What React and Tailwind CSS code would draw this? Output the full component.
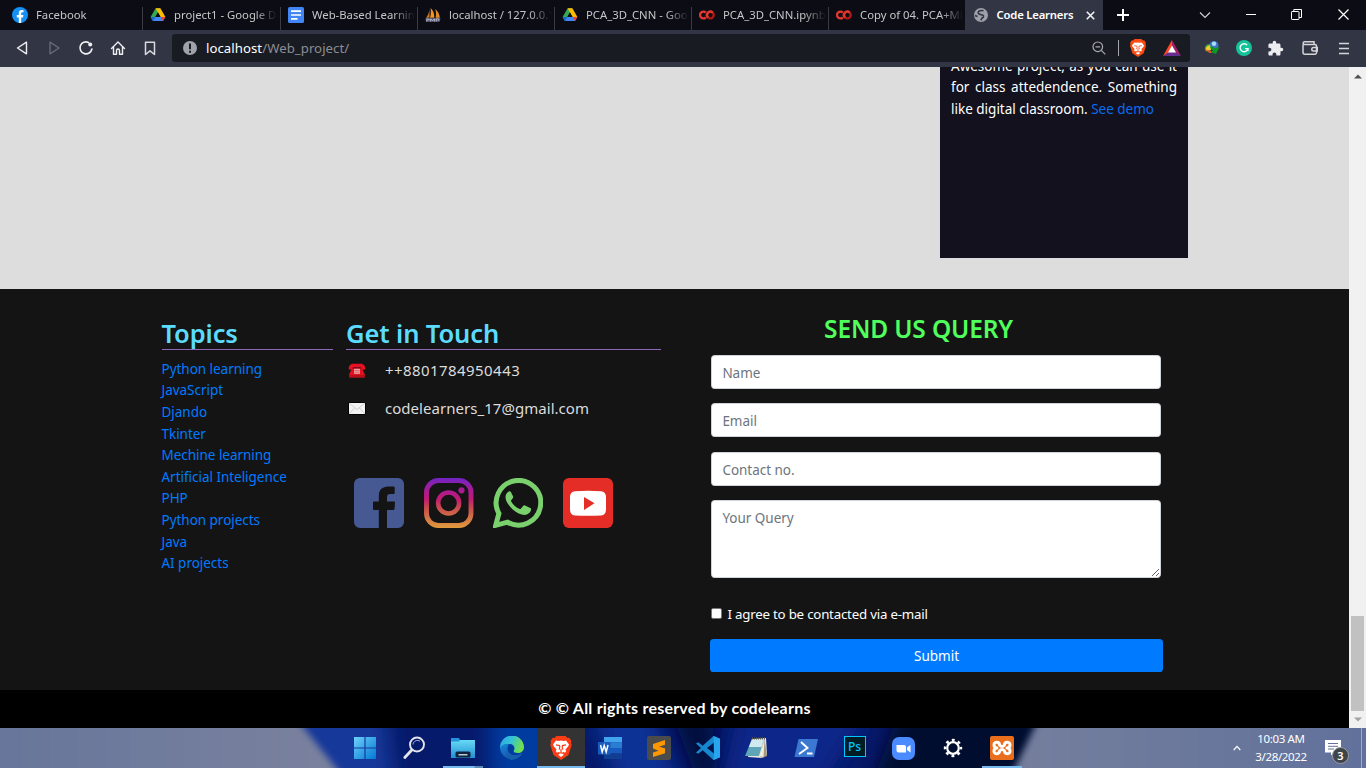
import React from "react";
import { MdExtension } from "react-icons/md";

const Drive = () => (
  <svg width="16" height="16" viewBox="0 0 16 16" className="shrink-0">
    <path d="M5.6 1.2h4.8L5.3 10 2.8 14 .6 10z" fill="#34a853" />
    <path d="M10.4 1.2 15.4 10h-5L5.6 1.2z" fill="#fbbc04" />
    <path d="M15.4 10 13 14H2.8L5.2 10z" fill="#4285f4" />
    <path d="M.6 10h4.6L2.8 14z" fill="#1967d2" />
    <path d="M15.4 10h-4.6L13 14z" fill="#ea4335" />
    <path d="M8 5.4 10.6 10H5.4z" fill="#0c0c15" />
  </svg>
);

const Docs = () => (
  <svg width="16" height="16" viewBox="0 0 16 16" className="shrink-0">
    <rect width="16" height="16" rx="1.6" fill="#4285f4" />
    <path d="M3 4.2h10M3 8h10M3 11.8h6.5" stroke="#fff" strokeWidth="1.7" />
  </svg>
);

const Facebook = () => (
  <svg width="16" height="16" viewBox="0 0 16 16" className="shrink-0">
    <circle cx="8" cy="8" r="8" fill="#1590f5" />
    <path d="M6.8 16v-5.6H4.8V8h2V6.3c0-2.1 1.2-3.2 3-3.2.9 0 1.7.15 1.7.15v2h-1c-1 0-1.3.6-1.3 1.25V8h2.2l-.35 2.4H9.2V16z" fill="#fff" />
  </svg>
);

const PhpMyAdmin = () => (
  <svg width="16" height="16" viewBox="0 0 17 16" className="shrink-0">
    <path d="M4.8 1.5V11H1.2C3.2 8 4.4 5 4.8 1.5z" fill="#c97a26" />
    <path d="M6 .5c3 3 4.200 6.500 3.800 10.500H5.400C6.200 8 6.500 4 6 .5z" fill="#f29420" />
    <path d="M11 1.500c3 2.500 4.500 6 4.800 9.500h-4.600c.8-3 .6-6-.2-9.500z" fill="#e08a26" />
    <path d="M.5 11.500h16l-1 3.700H1z" fill="#62627e" />
    <path d="M2 15v-3l2.500 1v-1M6 15v-3l2 2 2-2v3M12 15v-3h2.500v2" stroke="#c9c9da" strokeWidth=".8" fill="none" />
  </svg>
);

const Colab = () => (
  <svg width="16" height="16" viewBox="0 0 16 16" className="shrink-0" fill="none" strokeWidth="2.400">
    <path d="M6.800 5.500a3.400 3.400 0 1 0 0 5" stroke="#e0382f" />
    <circle cx="11.300" cy="8" r="3.400" stroke="#b01813" />
    <path d="M9 10.500a3.400 3.400 0 0 1 4.600-5" stroke="#e0382f" />
  </svg>
);

const Globe = () => (
  <svg width="14" height="14" viewBox="0 0 14 14" className="shrink-0">
    <circle cx="7" cy="7" r="7" fill="#9da0a8" />
    <path d="M9.500 2.800C7 2 4.200 2.600 4.200 4.600c0 1.700 1.600 1.900 3 2.100 1.600.2 2.600.9 2.200 2.200-.3.900-1.700.9-1.900 2.100l-.7 1.400M1 7.500l2.500 1" stroke="#323544" strokeWidth="1.600" fill="none" />
  </svg>
);

const tabs = [
  { title: "Facebook", Icon: Facebook, fit: "pl-3 w-[143px]" },
  { title: "project1 - Google Drive", Icon: Drive, fit: "pl-[7px] w-[138px]" },
  { title: "Web-Based Learning", Icon: Docs, fit: "pl-[7px] w-[137px]" },
  { title: "localhost / 127.0.0.1", Icon: PhpMyAdmin, fit: "pl-[7px] w-[137px]" },
  { title: "PCA_3D_CNN - Google", Icon: Drive, fit: "pl-[7px] w-[137px]" },
  { title: "PCA_3D_CNN.ipynb", Icon: Colab, fit: "pl-[7px] w-[137px]" },
  { title: "Copy of 04. PCA+ML", Icon: Colab, fit: "pl-[7px] w-[136px]" },
];

function TabBar() {
  return (
    <div className="flex h-[30px] shrink-0 bg-[#0c0c15] text-[11.3px] text-[#c6c6c8]">
      {tabs.map(({ title, Icon, fit }, i) => (
        <div key={title} className={"flex shrink-0 items-center overflow-hidden " + fit}>
          <Icon />
          <span className="ml-2 flex-1 overflow-hidden whitespace-nowrap [mask-image:linear-gradient(90deg,#000_80px,transparent_103px)]">{title}</span>
          {i < 6 && <i className="mt-[7px] h-[23px] w-px bg-[#3b3b41]" />}
        </div>
      ))}
      <div className="flex w-[138px] shrink-0 items-center bg-[#323544] pl-[9px] text-white">
        <Globe />
        <span className="ml-[8.500px] w-[78.500px] whitespace-nowrap text-[11.300px] font-semibold tracking-[-0.200px]">Code Learners</span>
        <svg width="9" height="9" viewBox="0 0 9 9" className="ml-[11px]"><path d="m.8.8 7.400 7.400M8.200.8.8 8.200" stroke="#f2f2f2" strokeWidth="1.600" /></svg>
      </div>
      <div className="flex flex-1 items-center">
        <svg width="12" height="12" viewBox="0 0 12 12" className="ml-[14px]"><path d="M6 0v12M0 6h12" stroke="#fff" strokeWidth="2" /></svg>
        <svg width="12" height="8" viewBox="0 0 12 8" className="-mt-px ml-[70px]"><path d="m1 1.500 5 5 5-5" stroke="#d4d4d6" strokeWidth="1.100" fill="none" /></svg>
        <i className="-mt-px ml-[35px] h-px w-[10px] bg-white" />
        <svg width="11" height="11" viewBox="0 0 11 11" className="-mt-[2px] ml-[35px]" fill="none" stroke="#fff"><rect x=".5" y="2.500" width="7.500" height="8" rx=".6" /><path d="M2.800 2.500v-2h7.700v8H8" /></svg>
        <svg width="11" height="11" viewBox="0 0 11 11" className="-mt-[2px] ml-[36px]"><path d="m.5.5 10 10M10.500.5l-10 10" stroke="#fff" strokeWidth="1.200" /></svg>
      </div>
    </div>
  );
}

const Lion = ({ size, color }) => (
  <span className="grid place-items-center">
    <svg width={size} height={size} viewBox="0 0 24 24">
      <path d="M12 0h4.500l2 2 1.800-.2L22.500 5 22 7l.7 2-3.200 10L12 24 4.500 19 1.300 9 2 7l-.5-2 2.200-3.200 1.800.2 2-2z" fill={color} />
      <path d="m7 4.600 2.300.4L12 4.500l2.700.5 2.300-.4 3 4-.9 2-2.600 2.800.7 1.800-1.200 1.500-1.500-.8-1.900 1.200 2.300 1.600L12 21l-2.900-2.300 2.300-1.600-1.900-1.200-1.500.8-1.200-1.500.7-1.800-2.600-2.800-.9-2z" fill="#fff" />
      <path d="m7 8.800 3.500.8.300 1.500-.6 2.500M17 8.800l-3.500.8-.3 1.500.6 2.500M12 13v3.500M10.500 17h3" stroke={color} strokeWidth="1.200" fill="none" />
    </svg>
  </span>
);

function Toolbar() {
  return (
    <div className="flex h-[37px] shrink-0 items-start bg-[#323544] pt-1">
      <div className="flex h-7 w-[172px] items-center pl-[16px]">
        <svg width="13" height="14" viewBox="0 0 13 14"><path d="M10.500 1.200v11.600L1.500 7z" fill="none" stroke="#f0f0f2" strokeWidth="1.400" strokeLinejoin="round" /></svg>
        <svg width="13" height="14" viewBox="0 0 13 14" className="ml-[19px]"><path d="M2 1.200v11.600L11 7z" fill="none" stroke="#686a76" strokeWidth="1.400" strokeLinejoin="round" /></svg>
        <svg width="16" height="16" viewBox="0 0 16 16" className="ml-[17px]"><path d="M10.500 2.400a6 6 0 1 0 3.400 6.600" fill="none" stroke="#f0f0f2" strokeWidth="1.600" strokeLinecap="round" /><circle cx="12.200" cy="4.400" r="2" fill="#f0f0f2" /></svg>
        <svg width="16" height="16" viewBox="0 0 16 16" className="ml-4"><path d="M1.500 8.500 8 2l6.500 6.500M3.500 7v7.200h3V10.500a1.500 1.500 0 0 1 3 0v3.700h3V7" fill="none" stroke="#f0f0f2" strokeWidth="1.400" strokeLinejoin="round" strokeLinecap="round" /></svg>
        <svg width="12" height="15" viewBox="0 0 12 15" className="ml-[18px]"><path d="M1.500 1.200h9v12.300L6 9.800l-4.500 3.700z" fill="none" stroke="#d8d9dd" strokeWidth="1.500" strokeLinejoin="round" /></svg>
      </div>
      <div className="flex h-7 w-[1018px] items-center rounded-[3px] bg-[#191b23] pl-[11px]">
        <svg width="14" height="14" viewBox="0 0 14 14"><circle cx="7" cy="7" r="7" fill="#a0a2aa" /><path d="M7 2.500v5.700M7 9.800v2" stroke="#191b23" strokeWidth="2" /></svg>
        <span className="ml-[9px] flex-1 pt-px text-[13.200px] tracking-[0.050px] text-[#8b8d92]"><b className="font-normal text-white">localhost</b>/Web_project/</span>
        <svg width="14" height="14" viewBox="0 0 14 14" fill="none" stroke="#a9abb1" strokeWidth="1.200"><circle cx="5.800" cy="5.800" r="4.800" /><path d="m9.300 9.300 4 4M3.500 5.800h4.600" /></svg>
        <i className="ml-3 h-4 w-px bg-[#a5a6ab]" />
        <span className="ml-[10px]"><Lion size={18} color="#fb4a12" /></span>
        <svg width="18" height="16" viewBox="0 0 18 16" className="ml-4 mr-[9px]"><path d="M9 0 0 16l9-5z" fill="#ff4724" /><path d="m9 0 9 16-9-5z" fill="#9e1f63" /><path d="M0 16h18l-9-6z" fill="#662d91" /><path d="m9 5.500 4 7H5z" fill="#fff" /></svg>
      </div>
      <div className="flex h-7 flex-1 items-center pl-[14px]">
        <svg width="16" height="16" viewBox="0 0 16 16"><circle cx="10" cy="5.500" r="4.500" fill="#3f73c8" /><circle cx="10" cy="3.800" r="2.200" fill="#a9dcf8" /><path d="M6 4C1 4-.5 8 2 11.500L7 10z" fill="#3aa23c" /><path d="M6 5.500C2.500 5.500 1 8 2.500 11L7 10z" fill="#f3d029" /><path d="M2 9.500C3 12 5 13.500 8 13l-1-2z" fill="#e05829" /><path d="m6 7.500 2.500-1 1.500 1.800 5.500-1.300-3.500 7-5-1.700 2-2z" fill="#0d9a1f" /></svg>
        <span className="ml-4 grid h-4 w-4 place-items-center rounded-full bg-[#15c39a]"><svg width="10" height="10" viewBox="0 0 10 10"><path d="M8.200 2.200A4 4 0 1 0 9 5.700H6M9 5.700V8" fill="none" stroke="#fff" strokeWidth="1.300" /></svg></span>
        <MdExtension className="ml-[15px] text-[17px] text-[#ededf0]" />
        <svg width="16" height="14" viewBox="0 0 16 14" className="ml-[18px]" fill="none" stroke="#d5d6da" strokeWidth="1.500"><path d="M1 3.500v8a1.700 1.700 0 0 0 1.700 1.700H13a1.500 1.500 0 0 0 1.500-1.500V5A1.500 1.500 0 0 0 13 3.500H2.500a1.300 1.300 0 0 1 0-2.700H12V3" /><path d="M15.500 6.500h-4a1.700 1.700 0 0 0 0 3.500h4z" /></svg>
        <svg width="10" height="13" viewBox="0 0 10 13" className="ml-[21px]"><path d="M0 1.500h10M0 6.500h10M0 11.500h10" stroke="#d5d6da" strokeWidth="1.700" /></svg>
      </div>
    </div>
  );
}

const topics = ["Python learning", "JavaScript", "Djando", "Tkinter", "Mechine learning", "Artificial Inteligence", "PHP", "Python projects", "Java", "AI projects"];

const Phone = () => (
  <svg width="18" height="16" viewBox="0 0 18 16">
    <path d="M4.200 5 1.300 11v3.500h15.400V11L13.800 5z" fill="#e01220" />
    <path d="M.8 6.500C.5 3 2.500.8 5 .8h8c2.500 0 4.500 2.200 4.200 5.700l-4.200.3-.5-2.500h-7L5 6.800z" fill="#e81123" />
    <path d="M5 4.300h8l.8 1.500H4.200z" fill="#8f0b14" />
    <path d="M6.200 5.800h5.600v5H6.200z" fill="#f3c4c7" /><path d="M8 5.800v5M10 5.800v5M6.200 7.500h5.600M6.200 9.200h5.600" stroke="#d8323f" strokeWidth=".5" />
    <path d="M1.500 12h15v2.300h-15z" fill="#b80e19" />
  </svg>
);
const Mail = () => (
  <svg width="18" height="13" viewBox="0 0 18 13">
    <path d="M.5.5h17v12H.5z" fill="#f2f2f2" stroke="#000" />
    <path d="m1 1 8 6.500L17 1M1 12l5.500-6M17 12l-5.500-6" fill="none" stroke="#c4c4c4" strokeWidth=".8" />
  </svg>
);

const SocialFacebook = () => (
  <svg width="50" height="50" viewBox="0 0 50 50">
    <path d="M6 0h38a6 6 0 0 1 6 6v38a6 6 0 0 1-6 6H33V32h6.500q1 0 1-1l.5-6.500q0-1-1-1h-7V19c0-2 1-3 3-3h3.500q1.200 0 1.200-1.200V9.700q0-1.200-1.200-1.200H34.500C28 8.500 24.800 12 24.800 18v5.500H20q-1 0-1 1V31q0 1 1 1h4.800v18H6a6 6 0 0 1-6-6V6a6 6 0 0 1 6-6z" fill="#475993" />
  </svg>
);
const SocialInstagram = () => (
  <svg width="50" height="50" viewBox="0 0 50 50" fill="none">
    <defs><linearGradient id="ig" gradientUnits="userSpaceOnUse" x1="0" y1="0" x2="0" y2="50"><stop stopColor="#7024c4" /><stop offset=".22" stopColor="#a51c98" /><stop offset=".42" stopColor="#c21975" /><stop offset=".6" stopColor="#c74c4d" /><stop offset="1" stopColor="#e09b3d" /></linearGradient></defs>
    <rect x="2.500" y="2.500" width="44.500" height="45" rx="12" stroke="url(#ig)" strokeWidth="4.900" />
    <circle cx="24.600" cy="25" r="10.500" stroke="url(#ig)" strokeWidth="4.600" />
    <circle cx="37.500" cy="12.300" r="3.100" fill="url(#ig)" />
  </svg>
);
const SocialWhatsapp = () => (
  <svg width="50" height="50" viewBox="0 0 50 50">
    <path d="M2.700 47.300 5.900 35.500A22.300 22.300 0 1 1 14.500 44.200z" fill="none" stroke="#7ad06d" strokeWidth="5" />
    <path d="M16.500 13.200c-1.500.3-4 2.600-4 6 0 3.800 3.200 8.300 6.700 11.700 4 3.900 9 6 12.300 6 3 0 6.400-2.500 6.600-5.400 0-.9-.1-1.200-.9-1.600l-5.200-2.500c-.8-.3-1.300-.2-1.900.5l-2.100 2.600c-.5.600-1 .7-1.800.3-3.400-1.500-6.200-4-8-7.200-.4-.7-.3-1.100.2-1.700l1.500-1.900c.4-.5.400-1 .1-1.700l-2.100-4.300c-.4-.8-.7-.9-1.400-.8z" fill="#7ad06d" />
  </svg>
);
const SocialYoutube = () => (
  <svg width="50" height="50" viewBox="0 0 50 50">
    <rect width="50" height="50" rx="6" fill="#e52d27" />
    <path d="M12 13.200q13-.8 26 0 5 .3 5 6v12q0 5.800-5 6.200-13 .8-26 0-5-.4-5-6.200v-12q0-5.700 5-6z" fill="#fff" />
    <path d="m21 19 10.500 6.300L21 32z" fill="#e52d27" />
  </svg>
);

const field = "block w-[450px] rounded-[3.600px] border border-[#ced4da] bg-white px-[10.400px] text-[13.500px] tracking-[-0.030px] text-[#495057] placeholder:text-[#6c757d] placeholder:opacity-100 outline-none";

function Page() {
  return (
    <main className="flex min-w-0 flex-1 flex-col bg-[#ddd]">
      <section className="h-[222px] shrink-0 overflow-hidden pl-[940px]">
        <article className="h-[191px] w-[248px] overflow-hidden bg-[#12111d] px-[11px] text-[13.500px] leading-[21.600px] text-white">
          <p className="-mt-[11.200px] [text-align-last:justify]">Awesome project, as you can use it</p>
          <p className="[text-align-last:justify]">for class attedendence. Something</p>
          <p className="whitespace-nowrap">like digital classroom. <a className="text-[#0a6cf0]">See demo</a></p>
        </article>
      </section>
      <footer className="flex h-[401px] shrink-0 bg-[#141414] pl-[162px]">
        <section className="w-[171px] pt-[27px]">
          <h2 className="h-[34px] border-b border-[#8d68b8] text-[25.500px] font-semibold leading-[35px] tracking-[-0.100px] text-[#5bdcff]"><span className="-ml-[0.600px]">Topics</span></h2>
          <ul className="-ml-[0.500px] mt-[8.800px] text-[13.500px] leading-[21.600px] tracking-[-0.030px] text-[#007bff]">
            {topics.map((t) => <li key={t}>{t}</li>)}
          </ul>
        </section>
        <section className="ml-[13px] w-[315px] pt-[27px]">
          <h2 className="h-[34px] border-b border-[#8d68b8] text-[25.500px] font-semibold leading-[35px] tracking-[-0.100px] text-[#5bdcff]">Get in Touch</h2>
          <div className="flex h-[38px] items-center pl-[2px] pt-[3px] text-[15px] text-[#dcdcdc]"><Phone /><span className="ml-[19px] tracking-[0.430px]">++8801784950443</span></div>
          <div className="flex h-[38px] items-center pl-[2px] pt-[3px] text-[15px] text-[#dcdcdc]"><Mail /><span className="ml-[19px] tracking-[0.040px]">codelearners_17@gmail.com</span></div>
          <div className="mt-[52px] flex gap-[19.700px] pl-2">
            <SocialFacebook />
            <SocialInstagram />
            <SocialWhatsapp />
            <SocialYoutube />
          </div>
        </section>
        <form className="ml-[49px] flex w-[453px] flex-col pt-[22px]">
          <h2 className="h-[44px] pr-9 text-center text-[24.500px] font-semibold leading-[35px] tracking-[-0.150px] text-[#50ff5c]">SEND US QUERY</h2>
          <div className="ml-px flex flex-col">
            <input className={field + " h-[34px] pt-[2px]"} placeholder="Name" />
            <input className={field + " mt-[14px] h-[34px] pt-[2px]"} placeholder="Email" />
            <input className={field + " mt-[15px] h-[34px] pt-[2px]"} placeholder="Contact no." />
            <textarea className={field + " mt-[14px] h-[78px] py-[7px]"} placeholder="Your Query" />
          </div>
          <label className="mt-[26px] flex h-[21px] items-center pl-px text-[13.300px] tracking-[-0.220px] text-white">
            <i className="-mt-[2px] h-[11px] w-[11px] rounded-[2px] border border-[#767676] bg-white" />
            <span className="ml-[5.500px]">I agree to be contacted via e-mail</span>
          </label>
          <button type="button" className="mt-[14px] h-[33px] w-[453px] rounded-[3.600px] bg-[#007bff] pt-[2px] text-[13.500px] text-white">Submit</button>
        </form>
      </footer>
      <div className="h-[38px] bg-black text-center font-['Lato'] text-[16px] font-bold leading-[36px] tracking-[0.220px] text-white">© © All rights reserved by codelearns</div>
    </main>
  );
}

function Scrollbar() {
  return (
    <div className="flex w-[17px] shrink-0 flex-col items-center bg-[#f1f1f1]">
      <svg width="8" height="5" viewBox="0 0 8 5" className="mt-[7px]"><path d="M0 4.500 4 .5l4 4z" fill="#505050" /></svg>
      <i className="mt-[537px] h-[95px] w-[13px] bg-[#c1c1c1]" />
      <svg width="8" height="5" viewBox="0 0 8 5" className="mt-[6px]"><path d="m0 .5 4 4 4-4z" fill="#a3a3a3" /></svg>
    </div>
  );
}

const apps = [
  { id: "start", icon: <svg width="22" height="22" viewBox="0 0 22 22"><defs><linearGradient id="win" x1="0" y1="0" x2="1" y2="1" gradientUnits="objectBoundingBox"><stop stopColor="#6fd0fb" /><stop offset="1" stopColor="#0078d4" /></linearGradient></defs><path d="M0 0h10.400v10.400H0zM11.600 0H22v10.400H11.600zM0 11.600h10.400V22H0zM11.600 11.600H22V22H11.600z" fill="url(#win)" /></svg> },
  { id: "search", icon: <svg width="24" height="24" viewBox="0 0 24 24" fill="none"><circle cx="15" cy="8.500" r="7" stroke="#e4e4ea" strokeWidth="1.900" /><path d="M11 8.500a4.500 4.500 0 0 1 7-3.300" stroke="#aeb8da" /><path d="m9.800 14-7 7.500" stroke="#e4e4ea" strokeWidth="2.800" strokeLinecap="round" /></svg> },
  { id: "files", icon: <svg width="24" height="20" viewBox="0 0 24 20"><defs><linearGradient id="fo" x2="0" y2="1"><stop stopColor="#67daf5" /><stop offset="1" stopColor="#2490d4" /></linearGradient></defs><path d="M0 2h24v18H0z" fill="url(#fo)" /><path d="M0 0h8l1 2-1 1.500H0z" fill="#2492d8" /><rect x="4.500" y="13.500" width="15" height="6" rx="1.500" fill="#10233f" /><path d="M7.500 16.800h9" stroke="#e5f6ff" strokeWidth="1.200" /></svg>, bar: "w-10 bg-[linear-gradient(90deg,#76b9ed_31px,#5b8cb8_32px)]" },
  { id: "edge", icon: <svg width="24" height="24" viewBox="0 0 24 24"><defs><linearGradient id="e1" x2="1" y2=".3"><stop stopColor="#2aa6df" /><stop offset=".5" stopColor="#35c1d9" /><stop offset="1" stopColor="#6ee04d" /></linearGradient><linearGradient id="e2" x2=".3" y2="1"><stop stopColor="#1686d4" /><stop offset="1" stopColor="#1b56b4" /></linearGradient></defs><path d="M0 12a12 12 0 0 1 24-1c0 4-3 6-6 6-4 0-5-1.500-4-3 1.500-2.500-.5-6-4.500-6C5 8 1 10 0 13z" fill="url(#e1)" /><path d="M0 12.500C1 8.500 6 7 9.500 8.500 6 10 7 18 13 19c4 .6 7-.5 9.500-2A12 12 0 0 1 0 12.500z" fill="url(#e2)" /><path d="M9.300 9C5.500 11 6 17.500 11 19.500c4 1.300 8-.5 11.300-2.500C19 22.500 14.500 24 11 23.900 6 22 4.500 13 9.300 9z" fill="#1660a8" /></svg> },
  { id: "brave", icon: <Lion size={24} color="#fa3c16" />, active: true, bar: "w-12 bg-[#76b9ed]" },
  { id: "word", icon: <svg width="24" height="22" viewBox="0 0 24 22"><path d="M6 0h18v5.500H6z" fill="#41a5ee" /><path d="M6 5.500h18V11H6z" fill="#2b7cd3" /><path d="M6 11h18v5.500H6z" fill="#185abd" /><path d="M6 16.500h18V22H6z" fill="#103f91" /><rect y="5" width="12.500" height="12.500" fill="#185abd" /><path d="m2.500 8 1.700 7 2-6.500 2 6.500 1.800-7" stroke="#fff" strokeWidth="1.500" fill="none" /></svg> },
  { id: "sublime", icon: <svg width="24" height="24" viewBox="0 0 24 24"><rect width="24" height="24" rx="2" fill="#4b4b4b" /><path d="M18 4v4.700L6 12.500V8zM6 8.500l12 4v5L6 12.500zM18 12.700v4.500L6 21v-4.500z" fill="#ff9800" /></svg> },
  { id: "code", icon: <svg width="24" height="24" viewBox="0 0 24 24"><path d="m17.500 0 6.500 2.800v18.400L17.500 24 6.700 14.200 2.200 17.700 0 16.400 5 12 0 7.600l2.200-1.300 4.500 3.500zM18 6.500 11 12l7 5.500z" fill="#1688d0" fillRule="evenodd" /><path d="m17.500 0 6.500 2.800v18.400L17.500 24l.5-5z" fill="#27a5ee" /></svg> },
  { id: "notes", icon: <svg width="23" height="22" viewBox="0 0 23 22"><path d="m8 2 13-1 1 17-5 3-14-1z" fill="#e8e6dc" /><path d="M7 2h12l-5 17H0z" fill="#5fa5b8" /><path d="M7 2h12l-2.500 8H3.800z" fill="#cfe9ee" /><path d="m19.500 2 2.500 17-5 2-2-2z" fill="#a59a7c" /><path d="m19.500 3-1 17-4-1z" fill="#efece0" /><path d="M7 1.500h13" stroke="#615e54" strokeDasharray="1 1" strokeWidth="2" /></svg> },
  { id: "shell", icon: <svg width="24" height="18" viewBox="0 0 24 18"><path d="M4.500 0H24l-4 18H.5z" fill="#3b78d2" /><path d="m7 3 6.500 6L5 15M13 14.500h5.500" fill="none" stroke="#fff" strokeWidth="1.900" /></svg> },
  { id: "ps", icon: <span className="-mt-[3px] grid h-[21px] w-[22px] place-items-center border border-[#00c8ff] bg-[#001d26] pt-px text-[12px] font-medium leading-none text-[#00c8ff]">Ps</span> },
  { id: "zoom", icon: <svg width="23" height="23" viewBox="0 0 23 23"><rect width="23" height="23" rx="7" fill="#4a8cff" /><path d="M4.500 8h7.500q2 0 2 2v5.500H6.500q-2 0-2-2zM15 10.500l3.500-2.500v7.500L15 13z" fill="#fff" /></svg> },
  { id: "settings", icon: <svg width="20" height="20" viewBox="0 0 20 20" fill="none" stroke="#fff"><circle cx="10" cy="10" r="5.800" strokeWidth="2.200" /><circle cx="10" cy="10" r="8" strokeWidth="2.400" strokeDasharray="2.900 3.383" strokeDashoffset="1.450" /></svg> },
  { id: "xampp", icon: <span className="grid h-6 w-6 place-items-center rounded-[2px] bg-[#ea6f1c]"><svg width="20" height="16" viewBox="0 0 20 16" fill="none" stroke="#fff" strokeWidth="3" strokeLinecap="round" strokeLinejoin="round"><path d="M7.500 5C7.500 1.500 2 1.500 2 4.800 2 7 3.500 8 5 8 3.500 8 2 9 2 11.200 2 14.500 7.500 14.500 7.500 11M12.500 5c0-3.500 5.500-3.500 5.500-.2C18 7 16.500 8 15 8c1.500 0 3 1 3 3.200 0 3.300-5.500 3.300-5.500-.2M7.500 5q2.500 3 5 0M7.500 11q2.500-3 5 0" /></svg></span>, bar: "w-10 bg-[#76b9ed]" },
];

function Taskbar() {
  return (
    <div className="relative flex h-10 shrink-0 overflow-hidden bg-[#061a6b]">
      <svg width="1366" height="40" viewBox="0 0 1366 40" className="absolute inset-0">
        <defs>
          <filter id="soft" x="-20%" y="-50%" width="140%" height="200%"><feGaussianBlur stdDeviation="3.500" /></filter>
          <filter id="wide" x="-40%" y="-100%" width="180%" height="300%"><feGaussianBlur stdDeviation="10" /></filter>
          <linearGradient id="tl"><stop stopColor="#66759a" /><stop offset="1" stopColor="#7b829e" /></linearGradient>
          <linearGradient id="tr"><stop stopColor="#757f9d" /><stop offset="1" stopColor="#60709a" /></linearGradient>
        </defs>
        <path d="M280-20H385L395 60H310z" fill="#17389a" filter="url(#wide)" />
        <path d="M490-20h60l10 80h-70z" fill="#053ba0" filter="url(#wide)" />
        <path d="M590-20h60l30 80h-60z" fill="#103396" filter="url(#wide)" />
        <path d="M670-20h40l10 80h-20z" fill="#050b3a" filter="url(#wide)" />
        <path d="M740-20h130l-50 80H720z" fill="#08268a" filter="url(#wide)" />
        <path d="M900-20h150l-20 80H870z" fill="#04072e" filter="url(#wide)" />
        <path d="M-20-20H288L352 60H-20z" fill="url(#tl)" filter="url(#soft)" />
        <path d="M1044-20H1390V60H1005z" fill="url(#tr)" filter="url(#soft)" />
      </svg>
      <div className="relative flex w-full pl-[340px] text-white">
        {apps.map(({ id, icon, active, bar }) => (
          <div key={id} className="flex w-[49px] shrink-0 justify-center">
            <div className={"relative flex h-10 w-12 items-center justify-center " + (active ? "bg-[#333]" : "")}>
              {icon}
              {bar && <i className={"absolute bottom-0 h-[2px] " + bar} />}
            </div>
          </div>
        ))}
        <div className="ml-[207px] flex items-center">
          <svg width="8" height="6" viewBox="0 0 9 6"><path d="m.8 5.200 3.700-4 3.700 4" fill="none" stroke="#fff" strokeWidth="1.400" /></svg>
          <div className="ml-[6px] w-[68px] pb-px text-center text-[11.500px] leading-[18px] tracking-[-0.350px]">
            <div>10:03 AM</div>
            <div>3/28/2022</div>
          </div>
          <div className="relative ml-[10px] h-4 w-4">
            <svg width="16" height="16" viewBox="0 0 16 16"><path d="M0 0h16v12.500H9L6 15.500v-3H0z" fill="#fff" /><path d="M3 3.500h10M3 6.300h10M3 9h6" stroke="#64739a" /></svg>
            <span className="absolute left-[7px] top-[7px] grid h-[17px] w-[17px] place-items-center rounded-full border border-[#9a9da5] bg-[#3f4449] text-[11px] font-semibold leading-none">3</span>
          </div>
          <i className="ml-[20px] h-10 w-px bg-[#a4abc0]" />
        </div>
      </div>
    </div>
  );
}

export default function App() {
  return (
    <div className="flex h-[768px] w-[1366px] flex-col overflow-hidden font-['Noto_Sans','Open_Sans',sans-serif]">
      <TabBar />
      <Toolbar />
      <div className="flex h-[661px] shrink-0">
        <Page />
        <Scrollbar />
      </div>
      <Taskbar />
    </div>
  );
}
